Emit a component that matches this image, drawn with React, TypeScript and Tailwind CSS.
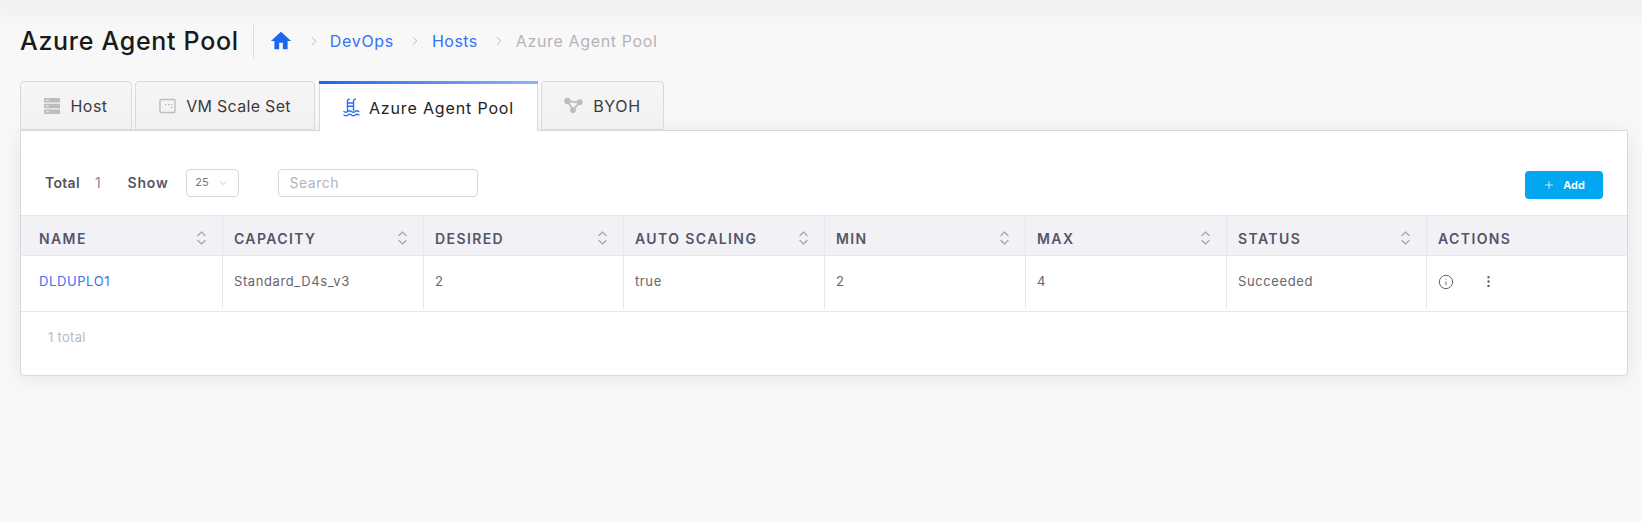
import { ChevronDown, ChevronRight, EllipsisVertical, Info, Plus } from "lucide-react";

const columns = ["NAME", "CAPACITY", "DESIRED", "AUTO SCALING", "MIN", "MAX", "STATUS", "ACTIONS"];
const row = ["Standard_D4s_v3", "2", "true", "2", "4", "Succeeded"];

const HostIcon = () => (
  <svg width="16" height="18" viewBox="0 0 16 18" fill="#bdbdbd">
    <rect y="1" width="16" height="4.5" rx="0.6" />
    <rect y="6.8" width="16" height="4.5" rx="0.6" />
    <rect y="12.6" width="16" height="4.5" rx="0.6" />
    <rect x="2" y="2.7" width="3" height="1" fill="#f2f2f2" />
    <rect x="2" y="8.5" width="3" height="1" fill="#f2f2f2" />
    <rect x="2" y="14.3" width="3" height="1" fill="#f2f2f2" />
  </svg>
);

const VmIcon = () => (
  <svg width="17" height="16" viewBox="0 0 17 16" fill="none">
    <rect x="1" y="1.5" width="15" height="13" rx="1" stroke="#bdbdbd" strokeWidth="1.4" />
    <rect x="6" y="6" width="1.2" height="1.2" fill="#a8a8a8" />
    <rect x="9" y="6" width="1.2" height="1.2" fill="#a8a8a8" />
    <rect x="12" y="6" width="1.2" height="1.2" fill="#a8a8a8" />
    <rect x="12" y="9" width="1.2" height="1.2" fill="#a8a8a8" />
  </svg>
);

const PoolIcon = () => (
  <svg width="17" height="19" viewBox="0 0 17 19" fill="none" stroke="#2e6ff2" strokeWidth="1.4" strokeLinecap="round">
    <path d="M4.5 12.5V3C4.5 1.9 5.2 1.2 6.3 1.2" />
    <path d="M10.5 12.5V3c0-1.1.7-1.8 1.8-1.8" />
    <path d="M4.5 5h6M4.5 8.3h6" />
    <path d="M1 13.5c1.3 1 2.4 1 3.7 0s2.4-1 3.7 0 2.4 1 3.7 0 2.4-1 3.7 0" />
    <path d="M1 17c1.3 1 2.4 1 3.7 0s2.4-1 3.7 0 2.4 1 3.7 0 2.4-1 3.7 0" />
  </svg>
);

const ByohIcon = () => (
  <svg width="19" height="17" viewBox="0 0 19 17" fill="#bdbdbd" stroke="#bdbdbd">
    <path d="M3.5 4 9 13 15.5 5.5z" fill="none" strokeWidth="1.8" />
    <circle cx="3.5" cy="4" r="2.9" />
    <circle cx="15.8" cy="5.2" r="2.5" />
    <circle cx="9" cy="13.3" r="2.5" />
  </svg>
);

const SortIcon = () => (
  <svg width="9" height="14" viewBox="0 0 9 14" fill="none" stroke="#a8a8b4" strokeWidth="1.3" strokeLinecap="round" strokeLinejoin="round">
    <path d="M1 4.5 4.5 1 8 4.5" />
    <path d="M1 9.5 4.5 13 8 9.5" />
  </svg>
);

const tabBase = "flex items-center justify-center gap-[10px] h-[49px] border border-[#d9d9d9] rounded-t-[4px] bg-gradient-to-b from-[#f6f6f6] to-[#f1f1f1] text-[#3c3c3c]";
const tableCols = "grid grid-cols-[202px_201px_200px_201px_201px_201px_200px_1fr]";

export default function App() {
  return (
    <div className="min-h-[522px] bg-[#f8f8f8] font-['Inter','Liberation_Sans',sans-serif] overflow-hidden">
      <div className="h-0 mx-[-10px] shadow-[0_0_28px_8px_rgba(0,0,0,0.07)]" />
      <div className="px-[20px] pt-[24px]">
        <div className="flex items-center h-[34px]">
          <h1 className="text-[25px] leading-[34px] font-medium text-[#1a1a1a] tracking-[0.7px] pr-[14px] border-r border-[#dcdcdc]">Azure Agent Pool</h1>
          <svg className="ml-[16px]" width="22" height="22" viewBox="0 0 24 24" fill="#1c64f2">
            <path d="M10 21v-7h4v7h5.2v-9H23L12 2 1 12h3.8v9z" />
          </svg>
          <ChevronRight className="ml-[15px] text-[#a3a3a3]" size={14} strokeWidth={1.3} />
          <a className="ml-[9px] text-[16px] text-[#3772f0] tracking-[0.7px]">DevOps</a>
          <ChevronRight className="ml-[14px] text-[#a3a3a3]" size={14} strokeWidth={1.3} />
          <a className="ml-[10px] text-[16px] text-[#3772f0] tracking-[0.45px]">Hosts</a>
          <ChevronRight className="ml-[14px] text-[#a3a3a3]" size={14} strokeWidth={1.3} />
          <span className="ml-[10px] text-[16px] text-[#b4b4b8] tracking-[0.65px]">Azure Agent Pool</span>
        </div>

        <div className="flex items-end mt-[23px] text-[16px] tracking-[0.5px] relative z-10">
          <div className={`${tabBase} w-[112px]`}>
            <HostIcon />
            <span>Host</span>
          </div>
          <div className={`${tabBase} w-[180px] ml-[3px]`}>
            <VmIcon />
            <span className="tracking-[0.3px]">VM Scale Set</span>
          </div>
          <div className="flex flex-col w-[219px] h-[50px] ml-[4px] bg-white border-x border-[#d9d9d9] mb-[-1px] text-[#222]">
            <div className="h-[3px] mx-[-1px] bg-gradient-to-r from-[#1c64f2] to-[#8fb2f8]" />
            <div className="flex flex-1 items-center justify-center gap-[9px]">
              <PoolIcon />
              <span className="tracking-[0.85px]">Azure Agent Pool</span>
            </div>
          </div>
          <div className={`${tabBase} w-[123px] ml-[3px]`}>
            <ByohIcon />
            <span className="tracking-[0.7px]">BYOH</span>
          </div>
        </div>

        <div className="w-[1608px] h-[246px] bg-white border border-[#d9d9d9] rounded-b-[4px] shadow-[0_2px_20px_rgba(0,0,0,0.08)]">
          <div className="flex items-center h-[84px] pt-[19px] px-[24px] text-[14px]">
            <span className="font-semibold text-[#55555f] tracking-[0.3px]">Total</span>
            <span className="ml-[15px] text-[#8a8a8a]">1</span>
            <span className="ml-[27px] font-semibold text-[#55555f] tracking-[0.8px]">Show</span>
            <div className="ml-[17px] flex items-center justify-center gap-[8px] w-[53px] h-[28px] border border-[#d6d6dc] rounded-[4px] text-[11px] text-[#77777f]">
              25
              <ChevronDown size={12} strokeWidth={1} className="text-[#9a9aa2]" />
            </div>
            <input
              className="ml-[39px] w-[200px] h-[28px] px-[11px] border border-[#d6d6dc] rounded-[4px] text-[14px] tracking-[0.5px] placeholder:text-[#b4b4bc]"
              placeholder="Search"
            />
            <button className="ml-auto mt-[5px] flex items-center justify-center gap-[8px] w-[78px] h-[28px] rounded-[4px] bg-[#03a6f0] text-white text-[11px] font-semibold">
              <Plus size={12} strokeWidth={1.5} />
              Add
            </button>
          </div>

          <div className={`${tableCols} h-[41px] bg-[#f1f1f6] border-y border-[#e6e6ee] text-[14px] font-semibold text-[#55556a] tracking-[1.4px]`}>
            {columns.map((name, i) => (
              <div
                key={name}
                className={`flex items-center justify-between pt-[5px] ${i === 0 ? "pl-[18px]" : "pl-[11px]"} pr-[16px] ${i < 7 ? "border-r border-[#e6e6ee]" : ""}`}
              >
                <span>{name}</span>
                {i < 7 && <SortIcon />}
              </div>
            ))}
          </div>

          <div className={`${tableCols} h-[56px] border-b border-[#e6e6ee] text-[13px] text-[#66666e] tracking-[0.6px]`}>
            <div className="flex items-center h-[52px] pl-[18px] border-r border-[#e6e6ee] text-[#3772f0]">DLDUPLO1</div>
            {row.map((value, i) => (
              <div key={i} className="flex items-center h-[52px] pl-[11px] border-r border-[#e6e6ee]">
                {value}
              </div>
            ))}
            <div className="flex items-center h-[52px] pl-[11px] pb-[1px] gap-[27px]">
              <Info size={16} strokeWidth={1.5} className="text-[#66666e]" />
              <EllipsisVertical size={15} strokeWidth={1.8} className="text-[#55556a]" />
            </div>
          </div>

          <div className="pt-[15px] pl-[27px] text-[13px] leading-[20px] text-[#b9b9c0] tracking-[0.3px]">1 total</div>
        </div>
      </div>
    </div>
  );
}
